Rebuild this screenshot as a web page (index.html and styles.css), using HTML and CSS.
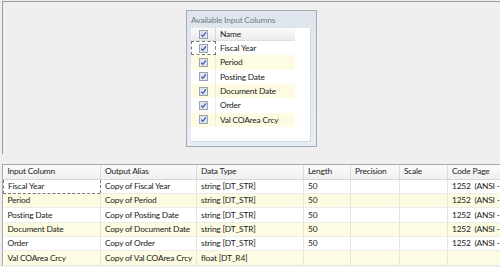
FILE: index.html
```html
<!DOCTYPE html>
<html>
<head>
<meta charset="utf-8">
<link rel="stylesheet" href="styles.css">
</head>
<body>
<div class="designer">
  <div class="box">
    <div class="box-title">Available Input Columns</div>
    <div class="box-inner">
      <div class="list">
        <div class="lrow lhead">
          <div class="lcheck"><svg class="cb" width="9" height="9" viewBox="0 0 9 9"><rect x="0.5" y="0.5" width="8" height="8" fill="#e2e4e8" stroke="#9aa3ad"/><path d="M2.2 4.6 L3.8 6.3 L6.9 2.4" fill="none" stroke="#3256c4" stroke-width="1.2"/></svg></div>
          <div class="lname">Name</div>
        </div>
        <div class="lrow"><div class="lcheck focus"><svg class="cb" width="9" height="9" viewBox="0 0 9 9"><rect x="0.5" y="0.5" width="8" height="8" fill="#e2e4e8" stroke="#9aa3ad"/><path d="M2.2 4.6 L3.8 6.3 L6.9 2.4" fill="none" stroke="#3256c4" stroke-width="1.2"/></svg></div><div class="lname">Fiscal Year</div></div>
        <div class="lrow alt"><div class="lcheck"><svg class="cb" width="9" height="9" viewBox="0 0 9 9"><rect x="0.5" y="0.5" width="8" height="8" fill="#e2e4e8" stroke="#9aa3ad"/><path d="M2.2 4.6 L3.8 6.3 L6.9 2.4" fill="none" stroke="#3256c4" stroke-width="1.2"/></svg></div><div class="lname">Period</div></div>
        <div class="lrow"><div class="lcheck"><svg class="cb" width="9" height="9" viewBox="0 0 9 9"><rect x="0.5" y="0.5" width="8" height="8" fill="#e2e4e8" stroke="#9aa3ad"/><path d="M2.2 4.6 L3.8 6.3 L6.9 2.4" fill="none" stroke="#3256c4" stroke-width="1.2"/></svg></div><div class="lname">Posting Date</div></div>
        <div class="lrow alt"><div class="lcheck"><svg class="cb" width="9" height="9" viewBox="0 0 9 9"><rect x="0.5" y="0.5" width="8" height="8" fill="#e2e4e8" stroke="#9aa3ad"/><path d="M2.2 4.6 L3.8 6.3 L6.9 2.4" fill="none" stroke="#3256c4" stroke-width="1.2"/></svg></div><div class="lname">Document Date</div></div>
        <div class="lrow"><div class="lcheck"><svg class="cb" width="9" height="9" viewBox="0 0 9 9"><rect x="0.5" y="0.5" width="8" height="8" fill="#e2e4e8" stroke="#9aa3ad"/><path d="M2.2 4.6 L3.8 6.3 L6.9 2.4" fill="none" stroke="#3256c4" stroke-width="1.2"/></svg></div><div class="lname">Order</div></div>
        <div class="lrow alt"><div class="lcheck"><svg class="cb" width="9" height="9" viewBox="0 0 9 9"><rect x="0.5" y="0.5" width="8" height="8" fill="#e2e4e8" stroke="#9aa3ad"/><path d="M2.2 4.6 L3.8 6.3 L6.9 2.4" fill="none" stroke="#3256c4" stroke-width="1.2"/></svg></div><div class="lname">Val COArea Crcy</div></div>
      </div>
    </div>
  </div>
</div>
<div class="grid-wrap">
  <table class="grid">
    <colgroup>
      <col class="c1"><col class="c2"><col class="c3"><col class="c4"><col class="c5"><col class="c6"><col class="c7">
    </colgroup>
    <thead>
      <tr><th>Input Column</th><th>Output Alias</th><th>Data Type</th><th>Length</th><th>Precision</th><th>Scale</th><th>Code Page</th></tr>
    </thead>
    <tbody>
      <tr><td class="focus">Fiscal Year</td><td>Copy of Fiscal Year</td><td>string [DT_STR]</td><td>50</td><td></td><td></td><td>1252&nbsp; (ANSI - Latin I)</td></tr>
      <tr class="alt"><td>Period</td><td>Copy of Period</td><td>string [DT_STR]</td><td>50</td><td></td><td></td><td>1252&nbsp; (ANSI - Latin I)</td></tr>
      <tr><td>Posting Date</td><td>Copy of Posting Date</td><td>string [DT_STR]</td><td>50</td><td></td><td></td><td>1252&nbsp; (ANSI - Latin I)</td></tr>
      <tr class="alt"><td>Document Date</td><td>Copy of Document Date</td><td>string [DT_STR]</td><td>50</td><td></td><td></td><td>1252&nbsp; (ANSI - Latin I)</td></tr>
      <tr><td>Order</td><td>Copy of Order</td><td>string [DT_STR]</td><td>50</td><td></td><td></td><td>1252&nbsp; (ANSI - Latin I)</td></tr>
      <tr class="alt"><td>Val COArea Crcy</td><td>Copy of Val COArea Crcy</td><td>float [DT_R4]</td><td></td><td></td><td></td><td></td></tr>
    </tbody>
  </table>
</div>
</body>
</html>
```
FILE: styles.css
```css
html, body {
  margin: 0;
  padding: 0;
}
body {
  width: 500px;
  height: 267px;
  overflow: hidden;
  background: #efefef;
  font-family: Lato, "Open Sans", sans-serif;
  font-size: 8.4px;
  letter-spacing: -0.2px;
  color: #1a1a1a;
}
.designer {
  margin: 1px 0 0 2px;
  height: 153px;
  border-top: 1px solid #9a9a9a;
  border-left: 1px solid #9a9a9a;
  background: #efefef;
  padding: 8px 0 0 183px;
  box-sizing: border-box;
}
.box {
  width: 131px;
  height: 137px;
  box-sizing: border-box;
  border: 1px solid #a4acb6;
  background: linear-gradient(#dfe5ec, #e8edf2);
  display: flex;
  flex-direction: column;
  padding: 0 5px 4px 4px;
}
.box-title {
  height: 17px;
  line-height: 19px;
  color: #6e7c8a;
  white-space: nowrap;
}
.box-inner {
  flex: 1;
  background: #fff;
  border: 1px solid #d3d9e0;
  border-width: 0 1px 1px 0;
}
.list {
  width: 104px;
}
.lrow {
  display: flex;
  height: 14.33px;
  align-items: center;
  white-space: nowrap;
}
.lrow.alt {
  background: #fdfce3;
}
.lhead {
  height: 13px;
  background: linear-gradient(#fbfbfb, #ececec);
  border-bottom: 1px solid #dedede;
  box-sizing: border-box;
}
.lcheck {
  width: 25px;
  height: 100%;
  display: flex;
  align-items: center;
  justify-content: center;
  border-right: 1px solid #ececec;
  box-sizing: border-box;
}
.lhead .lcheck {
  border-right: 1px solid #d8d8d8;
}
.lcheck.focus {
  border: 1px dashed #777;
}
.cb {
  display: block;
}
.lname {
  padding-left: 4px;
}
.grid-wrap {
  margin: 10px 0 0 2px;
  overflow: hidden;
  background: #fff;
  border-top: 1px solid #a6a6a6;
  border-left: 1px solid #a6a6a6;
}
.grid {
  border-collapse: collapse;
  table-layout: fixed;
  width: 560px;
}
.c1 { width: 97px; }
.c2 { width: 96px; }
.c3 { width: 107px; }
.c4 { width: 47px; }
.c5 { width: 49px; }
.c6 { width: 48px; }
.c7 { width: 116px; }
.grid th, .grid td {
  height: 14.33px;
  padding: 0 0 0 4px;
  text-align: left;
  font-weight: normal;
  white-space: nowrap;
  overflow: hidden;
  border-right: 1px solid #e3e3e3;
  border-bottom: 1px solid #ececec;
  box-sizing: border-box;
  line-height: 13px;
}
.grid th {
  background: linear-gradient(#fbfbfb, #efefef);
  border-right: 1px solid #dadada;
  border-bottom: 1px solid #d6d6d6;
  color: #222;
}
.grid tr.alt td {
  background: #fdfce3;
}
.grid td.focus {
  border: 1px dashed #777;
}
```
